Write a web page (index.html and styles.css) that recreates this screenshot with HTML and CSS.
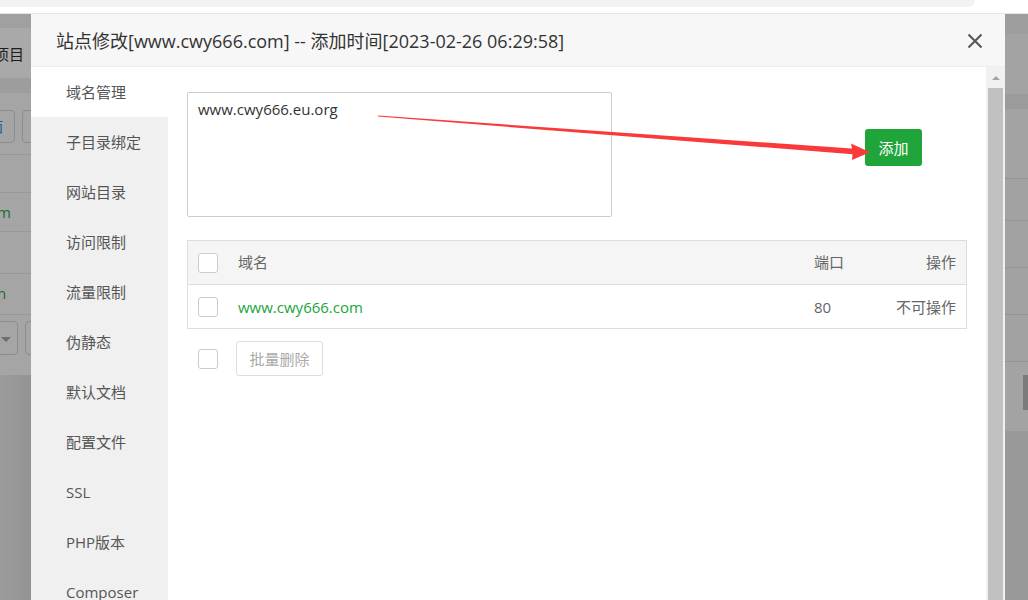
FILE: index.html
```html
<!DOCTYPE html>
<html lang="zh-CN">
<head>
<meta charset="utf-8">
<title>站点修改</title>
<link rel="stylesheet" href="styles.css">
</head>
<body>
<div class="page">
  <div class="topbar"><div class="addr"></div></div>
  <div class="stage">
    <div class="bg bg-left">
      <div class="b b1"></div>
      <div class="b b2"><span class="bg-text">项目</span></div>
      <div class="b b3"></div>
      <div class="b b4">
        <span class="ghost-btn g1"><span class="ghost-blue">面</span></span>
        <span class="ghost-btn g2"></span>
      </div>
      <div class="b row r38"></div>
      <div class="b row r39"><span class="ghost-green">m</span></div>
      <div class="b row r42"></div>
      <div class="b row r41"><span class="ghost-green">n</span></div>
      <div class="b row r60">
        <span class="ghost-btn g3"><span class="caret"></span></span>
        <span class="ghost-btn g4"></span>
      </div>
      <div class="b bfill"></div>
    </div>

    <div class="modal">
      <div class="modal-head">
        <span class="modal-title">站点修改[www.cwy666.com] -- 添加时间[2023-02-26 06:29:58]</span>
        <svg class="close" width="16" height="16" viewBox="0 0 16 16"><path d="M1.5 1.5L14.5 14.5M14.5 1.5L1.5 14.5" stroke="#555" stroke-width="2" fill="none"/></svg>
      </div>
      <div class="modal-body">
        <ul class="nav">
          <li class="active">域名管理</li>
          <li>子目录绑定</li>
          <li>网站目录</li>
          <li>访问限制</li>
          <li>流量限制</li>
          <li>伪静态</li>
          <li>默认文档</li>
          <li>配置文件</li>
          <li>SSL</li>
          <li>PHP版本</li>
          <li>Composer</li>
        </ul>
        <div class="content">
          <div class="add-row">
            <div class="domain-input">www.cwy666.eu.org</div>
            <button class="btn-add">添加</button>
          </div>
          <div class="table">
            <div class="tr th">
              <span class="cb"></span>
              <span class="c-name">域名</span>
              <span class="c-port">端口</span>
              <span class="c-op">操作</span>
            </div>
            <div class="tr">
              <span class="cb"></span>
              <span class="c-name link">www.cwy666.com</span>
              <span class="c-port">80</span>
              <span class="c-op">不可操作</span>
            </div>
          </div>
          <div class="batch">
            <span class="cb"></span>
            <button class="btn-batch">批量删除</button>
          </div>
        </div>
        <div class="scrollbar">
          <div class="sb-up"><span class="sb-arrow"></span></div>
          <div class="sb-thumb"></div>
        </div>
      </div>
    </div>

    <div class="bg bg-right">
      <div class="b rb1"></div>
      <div class="b rb2"></div>
      <div class="b rb3"></div>
      <div class="b rb4"></div>
      <div class="b row rr42"></div>
      <div class="b row rr47"></div>
      <div class="b row rr47"></div>
      <div class="b row rr47"></div>
      <div class="b rb5"><span class="dark-block"></span></div>
      <div class="b rbfill"></div>
    </div>
  </div>

  <svg class="arrow" width="1028" height="600" viewBox="0 0 1028 600">
    <polygon points="378,115.6 852,148.6 851,143.5 870,152.3 852,160 852.5,154.2 378,116.6" fill="#fa3a3a"/>
  </svg>
</div>
</body>
</html>
```

FILE: styles.css
```css
* { box-sizing: border-box; }
html, body { margin: 0; padding: 0; }
body {
  width: 1028px;
  height: 600px;
  overflow: hidden;
  background: #fff;
  font-family: "Open Sans", "Noto Sans CJK SC", sans-serif;
  color: #333;
}
.page {
  position: relative;
  width: 1028px;
  height: 600px;
  display: flex;
  flex-direction: column;
}

/* top browser strip */
.topbar {
  height: 14px;
  background: #fff;
  border-bottom: 1px solid #e3e4e6;
  flex: none;
}
.addr {
  width: 975px;
  height: 7px;
  background: #f1f2f4;
  border-bottom-right-radius: 8px;
}

.stage {
  flex: 1;
  display: flex;
  min-height: 0;
}

/* dimmed background page */
.bg { display: flex; flex-direction: column; overflow: hidden; flex: none; }
.bg-left { width: 31px; background: #a6a6a6; }
.bg-right { width: 23px; background: #a2a2a2; }
.b { flex: none; position: relative; }
.b1 { height: 14px; background: #a0a0a0; }
.b2 { height: 50px; background: #a9a9a9; display: flex; align-items: center; }
.bg-text { font-size: 15px; color: #1e1e1e; margin-left: -6px; white-space: nowrap; }
.b3 { height: 15px; background: #9d9d9d; }
.b4 { height: 62px; background: #a5a5a5; border-bottom: 1px solid #999; }
.ghost-btn {
  position: absolute;
  border: 1px solid #8c8c8c;
  border-radius: 4px;
  overflow: hidden;
}
.g1 { left: -12px; top: 17px; width: 27px; height: 33px; }
.g2 { left: 22px; top: 17px; width: 30px; height: 33px; }
.ghost-blue { position: absolute; right: 11px; top: 6px; color: #28578a; font-size: 14px; line-height: 20px; }
.row { border-bottom: 1px solid #999; background: #a5a5a5; }
.r38 { height: 38px; }
.r39 { height: 39px; }
.r42 { height: 42px; }
.r41 { height: 41px; }
.r60 { height: 60px; border-bottom: none; }
.ghost-green { position: absolute; left: -3px; top: 9px; font-size: 15px; color: #1c6a2a; }
.g3 { left: -10px; top: 6px; width: 28px; height: 34px; }
.g4 { left: 25px; top: 6px; width: 30px; height: 34px; }
.caret {
  position: absolute; right: 6px; top: 15px;
  border-left: 5px solid transparent; border-right: 5px solid transparent;
  border-top: 5px solid #6e6e6e;
}
.bfill { flex: 1; background: linear-gradient(90deg, #9c9c9c, #939393); }

.rb1 { height: 20px; background: #9e9e9e; }
.rb2 { height: 60px; background: #a3a3a3; }
.rb3 { height: 15px; background: #9b9b9b; }
.rb4 { height: 70px; background: #a3a3a3; border-bottom: 1px solid #939393; }
.rr42 { height: 42px; background: #a2a2a2; border-bottom: 1px solid #939393; }
.rr47 { height: 47px; background: #a2a2a2; border-bottom: 1px solid #939393; }
.rb5 { height: 69px; background: #a3a3a3; }
.dark-block { position: absolute; left: 18px; top: 13px; width: 5px; height: 35px; background: #7b7b7b; }
.rbfill { flex: 1; background: #999; }

/* modal */
.modal {
  width: 974px;
  flex: none;
  display: flex;
  flex-direction: column;
  background: #fff;
}
.modal-head {
  height: 53px;
  flex: none;
  background: #f7f7f7;
  border-bottom: 1px solid #eee;
  display: flex;
  align-items: center;
  padding: 0 22px 0 25px;
}
.modal-title {
  flex: 1;
  font-size: 18px;
  color: #333;
  white-space: nowrap;
}
.close { flex: none; margin-top: 2px; }

.modal-body {
  flex: 1;
  display: flex;
  min-height: 0;
}
.nav {
  list-style: none;
  margin: 0;
  padding: 0;
  width: 137px;
  flex: none;
  background: #f0f0f0;
}
.nav li {
  height: 50px;
  line-height: 50px;
  padding-left: 35px;
  font-size: 15px;
  color: #555;
  white-space: nowrap;
}
.nav li.active { background: #fff; }

.content {
  flex: 1;
  padding: 25px 19px 0 19px;
}
.add-row { display: flex; align-items: flex-start; }
.domain-input {
  width: 425px;
  height: 125px;
  border: 1px solid #ccc;
  border-radius: 2px;
  padding: 5px 10px;
  font-size: 15px;
  line-height: 22px;
  color: #333;
}
.btn-add {
  margin: 37px 0 0 253px;
  width: 57px;
  height: 37px;
  border: none;
  border-radius: 3px;
  background: #20a53a;
  color: #fff;
  font-family: inherit;
  font-size: 15px;
  padding: 0;
}

.table {
  margin-top: 23px;
  border: 1px solid #ddd;
}
.tr {
  height: 44px;
  display: flex;
  align-items: center;
  padding: 0 10px;
  font-size: 15px;
  color: #666;
}
.tr.th { background: #f5f5f5; border-bottom: 1px solid #ddd; height: 44px; padding-bottom: 2px; }
.tr.th .cb { margin-top: 2px; }
.tr + .tr { height: 43px; }
.cb {
  width: 20px;
  height: 20px;
  border: 1px solid #ccc;
  border-radius: 3px;
  background: #fff;
  flex: none;
}
.c-name { margin-left: 20px; flex: 1; }
.link { color: #20a53a; }
.c-port { width: 70px; }
.c-op { width: 72px; text-align: right; }

.batch {
  display: flex;
  align-items: center;
  padding-left: 11px;
  margin-top: 12px;
}
.btn-batch {
  margin-left: 18px;
  height: 35px;
  width: 87px;
  border: 1px solid #ddd;
  border-radius: 3px;
  background: #fff;
  color: #aaa;
  font-family: inherit;
  font-size: 15px;
  padding: 0;
}

.scrollbar {
  width: 19px;
  flex: none;
  background: #f1f1f1;
  display: flex;
  flex-direction: column;
  padding: 0 2px;
}
.sb-up {
  height: 21px;
  display: flex;
  align-items: center;
  justify-content: center;
  flex: none;
}
.sb-arrow {
  border-left: 4px solid transparent;
  border-right: 4px solid transparent;
  border-bottom: 4px solid #a3a3a3;
}
.sb-thumb { flex: 1; background: #c1c1c1; }

.arrow {
  position: absolute;
  left: 0;
  top: 0;
  pointer-events: none;
}
```
